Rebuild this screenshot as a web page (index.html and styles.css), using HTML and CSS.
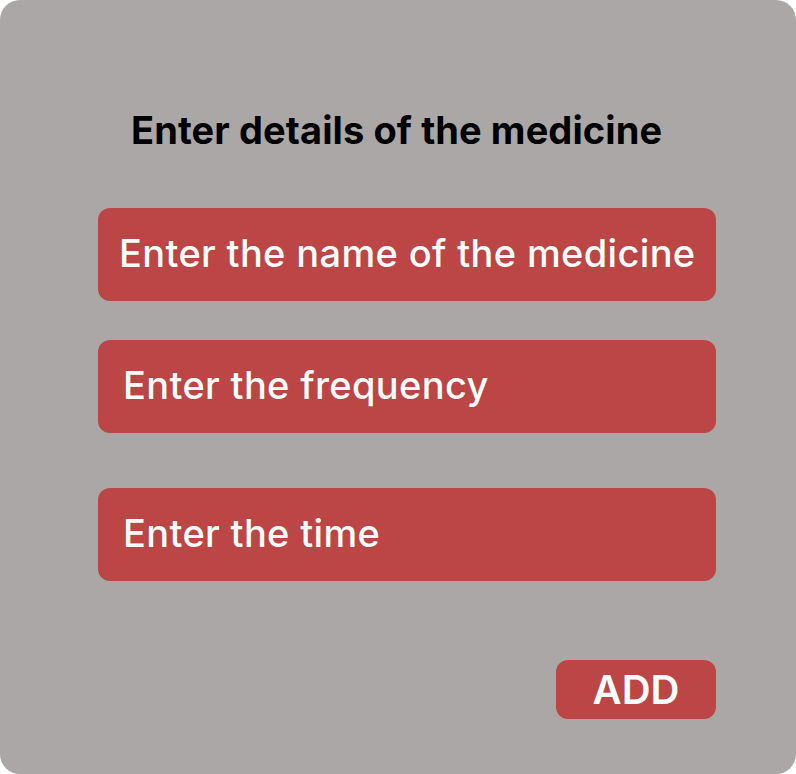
FILE: index.html
```html
<!DOCTYPE html>
<html>
<head>
<meta charset="utf-8">
<link rel="stylesheet" href="styles.css">
</head>
<body>
<div class="card">
  <h1 class="title">Enter details of the medicine</h1>
  <div class="fields">
    <div class="field f1">Enter the name of the medicine</div>
    <div class="field f2">Enter the frequency</div>
    <div class="field f3">Enter the time</div>
  </div>
  <div class="actions">
    <button class="add">ADD</button>
  </div>
</div>
</body>
</html>
```
FILE: styles.css
```css
html, body {
  margin: 0;
  padding: 0;
  background: #ffffff;
}
.card {
  width: 796px;
  height: 774px;
  box-sizing: border-box;
  background: #aba7a6;
  border-radius: 20px;
  padding: 0 80px 0 98px;
  display: flex;
  flex-direction: column;
  font-family: Inter, "Noto Sans", sans-serif;
}
.title {
  margin: 108px 0 0 33px;
  font-size: 38px;
  font-weight: 700;
  letter-spacing: 0.1px;
  color: #000;
  line-height: 44px;
  white-space: nowrap;
}
.fields {
  margin-top: 56px;
  display: flex;
  flex-direction: column;
}
.field {
  height: 93px;
  border-radius: 12px;
  background: #bc4546;
  color: #fff;
  font-size: 38px;
  font-weight: 500;
  letter-spacing: 0.35px;
  line-height: 91px;
  box-sizing: border-box;
  padding-left: 21px;
  white-space: nowrap;
}
.f2, .f3 { padding-left: 25px; }
.f2 { margin-top: 39px; }
.f3 { margin-top: 55px; }
.actions {
  margin-top: 79px;
  display: flex;
  justify-content: flex-end;
}
.add {
  width: 160px;
  height: 59px;
  border: none;
  border-radius: 12px;
  background: #bc4546;
  color: #fff;
  font-family: inherit;
  font-size: 40px;
  font-weight: 600;
  padding: 0;
}
```
